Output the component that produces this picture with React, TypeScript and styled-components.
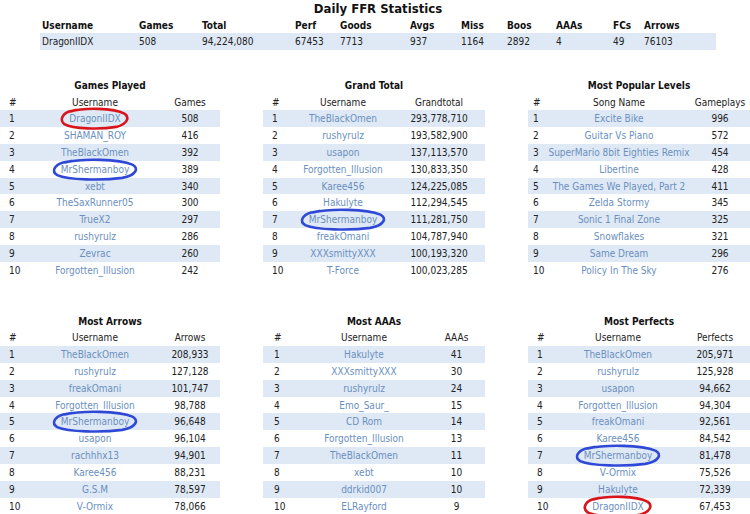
import React, { FunctionComponent } from "react";
import styled, { createGlobalStyle } from "styled-components";

const GlobalStyle = createGlobalStyle`
  body {
    margin: 0;
    background: #ffffff;
    font-family: "DejaVu Sans Condensed", "DejaVu Sans", sans-serif;
    font-stretch: condensed;
    font-size: 10px;
    color: #222222;
  }
`;

const Page = styled.div`
  width: 750px;
  height: 514px;
  overflow: hidden;
  display: flex;
  flex-direction: column;
`;

const StatsBlock = styled.div`
  margin-left: 40px;
  width: 676px;
`;

const PageTitle = styled.div`
  height: 17px;
  line-height: 17px;
  text-align: center;
  font-weight: bold;
  font-size: 13px;
  color: #111111;
`;

const Table = styled.table`
  width: 100%;
  table-layout: fixed;
  border-collapse: collapse;
  border-spacing: 0;
`;

const Col = styled.col<{ $w: number }>`
  width: ${({ $w }) => $w}px;
`;

const Row = styled.tr<{ $striped?: boolean; $h?: number }>`
  height: ${({ $h }) => $h ?? 16.9}px;
  background: ${({ $striped }) => ($striped ? "#dfe9f5" : "transparent")};
`;

const StatHead = styled.th`
  text-align: left;
  font-weight: bold;
  padding: 0 0 0 2px;
  color: #111111;
`;

const StatCell = styled.td`
  text-align: left;
  padding: 0 0 0 2px;
`;

const Grid = styled.div`
  margin-top: 28px;
  display: grid;
  grid-template-columns: 220px 222px 222px;
  column-gap: 43px;
  row-gap: 35px;
`;

const Caption = styled.div`
  height: 16px;
  line-height: 16px;
  text-align: center;
  font-weight: bold;
  color: #111111;
`;

const HeadCell = styled.th<{ $rank?: boolean; $pad: number }>`
  font-weight: normal;
  text-align: ${({ $rank }) => ($rank ? "left" : "center")};
  padding: 0 0 0 ${({ $rank, $pad }) => ($rank ? $pad : 0)}px;
  white-space: nowrap;
`;

const RankCell = styled.td<{ $pad: number }>`
  text-align: left;
  padding: 0 0 0 ${({ $pad }) => $pad}px;
`;

const NameCell = styled.td`
  text-align: center;
  padding: 0;
  white-space: nowrap;
  color: #6a8fbe;
`;

const ValueCell = styled.td`
  text-align: center;
  padding: 0;
`;

const Name = styled.span`
  position: relative;
  display: inline-block;
`;

const MarkSvg = styled.svg`
  position: absolute;
  top: -5px;
  left: -8px;
  width: calc(100% + 16px);
  height: calc(100% + 10px);
  overflow: visible;
  pointer-events: none;
`;

type MarkColor = "red" | "blue";

const Mark: FunctionComponent<{ color: MarkColor }> = ({ color }) => (
  <MarkSvg viewBox="0 0 100 30" preserveAspectRatio="none">
    <path
      d="M 14 5 C 35 -1, 78 0, 94 8 C 102 13, 99 23, 82 27 C 58 31, 18 30, 5 23 C -2 18, 1 9, 12 5 L 22 3"
      fill="none"
      stroke={color === "red" ? "#d8141c" : "#2f49d6"}
      strokeWidth={2.6}
      strokeLinecap="round"
      vectorEffect="non-scaling-stroke"
    />
  </MarkSvg>
);

type Entry = [string, string, MarkColor?];

type Board = {
  title: string;
  heads: [string, string, string];
  widths: [number, number, number];
  pad: number;
  rows: Entry[];
};

const boards: Board[] = [
  {
    title: "Games Played",
    heads: ["#", "Username", "Games"],
    widths: [30, 130, 60],
    pad: 9,
    rows: [
      ["DragonIIDX", "508", "red"],
      ["SHAMAN_ROY", "416"],
      ["TheBlackOmen", "392"],
      ["MrShermanboy", "389", "blue"],
      ["xebt", "340"],
      ["TheSaxRunner05", "300"],
      ["TrueX2", "297"],
      ["rushyrulz", "286"],
      ["Zevrac", "260"],
      ["Forgotten_Illusion", "242"],
    ],
  },
  {
    title: "Grand Total",
    heads: ["#", "Username", "Grandtotal"],
    widths: [30, 100, 92],
    pad: 9,
    rows: [
      ["TheBlackOmen", "293,778,710"],
      ["rushyrulz", "193,582,900"],
      ["usapon", "137,113,570"],
      ["Forgotten_Illusion", "130,833,350"],
      ["Karee456", "124,225,085"],
      ["Hakulyte", "112,294,545"],
      ["MrShermanboy", "111,281,750", "blue"],
      ["freakOmani", "104,787,940"],
      ["XXXsmittyXXX", "100,193,320"],
      ["T-Force", "100,023,285"],
    ],
  },
  {
    title: "Most Popular Levels",
    heads: ["#", "Song Name", "Gameplays"],
    widths: [20, 142, 60],
    pad: 5,
    rows: [
      ["Excite Bike", "996"],
      ["Guitar Vs Piano", "572"],
      ["SuperMario 8bit Eighties Remix", "454"],
      ["Libertine", "428"],
      ["The Games We Played, Part 2", "411"],
      ["Zelda Stormy", "345"],
      ["Sonic 1 Final Zone", "325"],
      ["Snowflakes", "321"],
      ["Same Dream", "296"],
      ["Policy In The Sky", "276"],
    ],
  },
  {
    title: "Most Arrows",
    heads: ["#", "Username", "Arrows"],
    widths: [30, 130, 60],
    pad: 9,
    rows: [
      ["TheBlackOmen", "208,933"],
      ["rushyrulz", "127,128"],
      ["freakOmani", "101,747"],
      ["Forgotten_Illusion", "98,788"],
      ["MrShermanboy", "96,648", "blue"],
      ["usapon", "96,104"],
      ["rachhhx13", "94,901"],
      ["Karee456", "88,231"],
      ["G.S.M", "78,597"],
      ["V-Ormix", "78,066"],
    ],
  },
  {
    title: "Most AAAs",
    heads: ["#", "Username", "AAAs"],
    widths: [37, 128, 57],
    pad: 11,
    rows: [
      ["Hakulyte", "41"],
      ["XXXsmittyXXX", "30"],
      ["rushyrulz", "24"],
      ["Emo_Saur_", "15"],
      ["CD Rom", "14"],
      ["Forgotten_Illusion", "13"],
      ["TheBlackOmen", "11"],
      ["xebt", "10"],
      ["ddrkid007", "10"],
      ["ELRayford", "9"],
    ],
  },
  {
    title: "Most Perfects",
    heads: ["#", "Username", "Perfects"],
    widths: [28, 124, 70],
    pad: 9,
    rows: [
      ["TheBlackOmen", "205,971"],
      ["rushyrulz", "125,928"],
      ["usapon", "94,662"],
      ["Forgotten_Illusion", "94,304"],
      ["freakOmani", "92,561"],
      ["Karee456", "84,542"],
      ["MrShermanboy", "81,478", "blue"],
      ["V-Ormix", "75,526"],
      ["Hakulyte", "72,339"],
      ["DragonIIDX", "67,453", "red"],
    ],
  },
];

const statHeads = [
  "Username",
  "Games",
  "Total",
  "Perf",
  "Goods",
  "Avgs",
  "Miss",
  "Boos",
  "AAAs",
  "FCs",
  "Arrows",
];
const statWidths = [97, 63, 93, 45, 70, 51, 46, 49, 57, 31, 74];
const statValues = [
  "DragonIIDX",
  "508",
  "94,224,080",
  "67453",
  "7713",
  "937",
  "1164",
  "2892",
  "4",
  "49",
  "76103",
];

const Leaderboard: FunctionComponent<{ board: Board }> = ({ board }) => (
  <div>
    <Caption>{board.title}</Caption>
    <Table>
      <colgroup>
        {board.widths.map((w, i) => (
          <Col key={i} $w={w} />
        ))}
      </colgroup>
      <thead>
        <Row $h={16}>
          <HeadCell $rank $pad={board.pad}>
            {board.heads[0]}
          </HeadCell>
          <HeadCell $pad={0}>{board.heads[1]}</HeadCell>
          <HeadCell $pad={0}>{board.heads[2]}</HeadCell>
        </Row>
      </thead>
      <tbody>
        {board.rows.map(([name, value, mark], i) => (
          <Row key={i} $striped={i % 2 === 0}>
            <RankCell $pad={board.pad}>{i + 1}</RankCell>
            <NameCell>
              <Name>
                {name}
                {mark && <Mark color={mark} />}
              </Name>
            </NameCell>
            <ValueCell>{value}</ValueCell>
          </Row>
        ))}
      </tbody>
    </Table>
  </div>
);

const App: FunctionComponent = () => (
  <Page>
    <GlobalStyle />
    <StatsBlock>
      <PageTitle>Daily FFR Statistics</PageTitle>
      <Table>
        <colgroup>
          {statWidths.map((w, i) => (
            <Col key={i} $w={w} />
          ))}
        </colgroup>
        <thead>
          <Row $h={16}>
            {statHeads.map((h) => (
              <StatHead key={h}>{h}</StatHead>
            ))}
          </Row>
        </thead>
        <tbody>
          <Row $striped $h={17}>
            {statValues.map((v, i) => (
              <StatCell key={i}>{v}</StatCell>
            ))}
          </Row>
        </tbody>
      </Table>
    </StatsBlock>
    <Grid>
      {boards.map((b) => (
        <Leaderboard key={b.title} board={b} />
      ))}
    </Grid>
  </Page>
);

export default App;
